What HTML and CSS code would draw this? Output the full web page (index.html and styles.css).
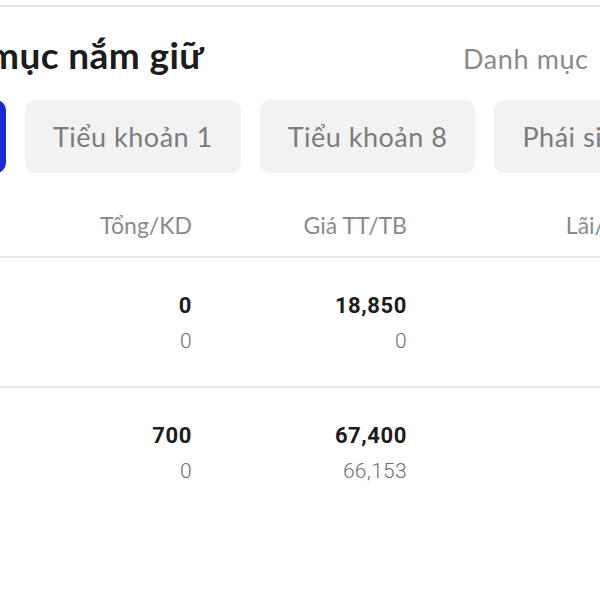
FILE: index.html
```html
<!DOCTYPE html>
<html lang="vi">
<head>
<meta charset="utf-8">
<link rel="stylesheet" href="styles.css">
</head>
<body>
<div class="screen">
  <div class="topline"></div>
  <div class="titlebar">
    <h1 class="title">mục nắm giữ</h1>
    <span class="link">Danh mục</span>
  </div>
  <div class="tabs">
    <div class="tab active"></div>
    <div class="tab">Tiểu khoản 1</div>
    <div class="tab">Tiểu khoản 8</div>
    <div class="tab">Phái sinh</div>
  </div>
  <div class="thead">
    <div class="cell">Tổng/KD</div>
    <div class="cell">Giá TT/TB</div>
    <div class="cell">Lãi/Lỗ</div>
  </div>
  <div class="row">
    <div class="cell"><div class="main">0</div><div class="sub">0</div></div>
    <div class="cell"><div class="main">18,850</div><div class="sub">0</div></div>
    <div class="cell"></div>
  </div>
  <div class="row last">
    <div class="cell"><div class="main">700</div><div class="sub">0</div></div>
    <div class="cell"><div class="main">67,400</div><div class="sub">66,153</div></div>
    <div class="cell"></div>
  </div>
</div>
</body>
</html>
```

FILE: styles.css
```css
html, body {
  margin: 0;
  padding: 0;
  background: #ffffff;
}
.screen {
  width: 600px;
  height: 600px;
  overflow: hidden;
  font-family: "Lato", "Noto Sans", sans-serif;
}
.topline {
  height: 2px;
  margin-top: 5px;
  background: #e6e6e6;
}
.titlebar {
  display: flex;
  align-items: baseline;
  height: 93px;
  white-space: nowrap;
}
.title {
  margin: 0 0 0 -12px;
  font-size: 37px;
  font-weight: 700;
  letter-spacing: 0.4px;
  color: #1c1c1c;
  line-height: 96px;
  flex: 0 0 auto;
}
.link {
  margin-left: auto;
  margin-right: -30px;
  font-size: 27px;
  letter-spacing: 0.6px;
  color: #8a8a8a;
  flex: 0 0 auto;
  width: 167px;
  overflow: hidden;
}
.tabs {
  display: flex;
  gap: 19px;
  margin-left: -54px;
  white-space: nowrap;
}
.tab {
  flex: 0 0 auto;
  height: 73px;
  box-sizing: border-box;
  padding: 0 28px;
  border-radius: 10px;
  background: #f2f2f2;
  color: #7b7b7b;
  font-size: 27px;
  letter-spacing: 0.5px;
  display: flex;
  align-items: center;
}
.tab.active {
  width: 60px;
  padding: 0;
  background: #1a2cd6;
}
.thead, .row {
  display: grid;
  grid-template-columns: 192px 215px 222px;
  border-bottom: 2px solid #e8e8e8;
}
.thead {
  height: 85px;
  box-sizing: border-box;
  align-items: center;
  font-size: 23px;
  color: #8a8a8a;
}
.thead .cell {
  padding-top: 20px;
}
.cell {
  text-align: right;
  white-space: nowrap;
}
.row {
  height: 130px;
  box-sizing: border-box;
  padding-top: 35px;
}
.row.last {
  border-bottom: none;
}
.main {
  font-family: "Roboto", "Noto Sans", sans-serif;
  font-weight: 700;
  font-size: 22px;
  letter-spacing: 0.6px;
  line-height: 26px;
  color: #1c1c1c;
}
.sub {
  font-family: "Roboto", "Noto Sans", sans-serif;
  font-weight: 300;
  font-size: 21px;
  letter-spacing: 0.3px;
  line-height: 26px;
  margin-top: 9px;
  color: #6e6e6e;
}
```
